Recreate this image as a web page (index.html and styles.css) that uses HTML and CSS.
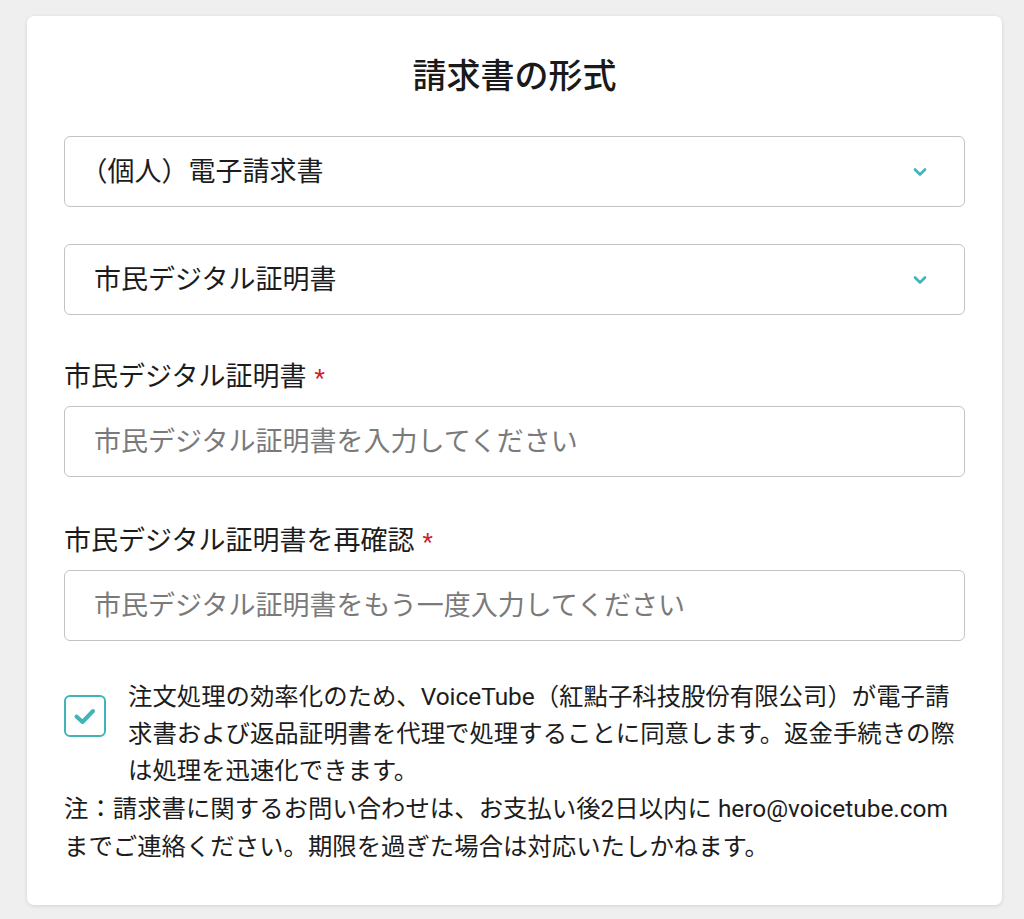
FILE: index.html
```html
<!DOCTYPE html>
<html lang="ja">
<head>
    <meta charset="UTF-8">
    <meta name="viewport" content="width=device-width, initial-scale=1.0">
    <title>請求書の形式</title>
    <link rel="stylesheet" href="styles.css">
</head>
<body>
    <div class="card">
        <h1 class="card-title">請求書の形式</h1>

        <div class="select-wrap">
            <select class="select-box">
                <option>（個人）電子請求書</option>
            </select>
            <svg class="chevron" width="14" height="10" viewBox="0 0 14 10"><path d="M2 2.5 L7 7.5 L12 2.5" fill="none" stroke="#3fb4b9" stroke-width="2.6" stroke-linecap="round" stroke-linejoin="round"/></svg>
        </div>

        <div class="select-wrap">
            <select class="select-box">
                <option>市民デジタル証明書</option>
            </select>
            <svg class="chevron" width="14" height="10" viewBox="0 0 14 10"><path d="M2 2.5 L7 7.5 L12 2.5" fill="none" stroke="#3fb4b9" stroke-width="2.6" stroke-linecap="round" stroke-linejoin="round"/></svg>
        </div>

        <div class="form-group">
            <label class="field-label" for="cert">市民デジタル証明書<span class="required">*</span></label>
            <input class="text-input" id="cert" type="text" placeholder="市民デジタル証明書を入力してください">
        </div>

        <div class="form-group">
            <label class="field-label" for="cert-confirm">市民デジタル証明書を再確認<span class="required">*</span></label>
            <input class="text-input" id="cert-confirm" type="text" placeholder="市民デジタル証明書をもう一度入力してください">
        </div>

        <label class="agree">
            <span class="checkbox">
                <svg width="26" height="22" viewBox="0 0 26 22"><path d="M4.5 11.5 L10.5 17 L21 6" fill="none" stroke="#3fb4b9" stroke-width="4" stroke-linecap="round" stroke-linejoin="round"/></svg>
            </span>
            <span class="agree-text">注文処理の効率化のため、VoiceTube（紅點子科技股份有限公司）が電子請求書および返品証明書を代理で処理することに同意します。返金手続きの際は処理を迅速化できます。</span>
        </label>

        <p class="note">注：請求書に関するお問い合わせは、お支払い後2日以内に hero@voicetube.com までご連絡ください。期限を過ぎた場合は対応いたしかねます。</p>
    </div>
</body>
</html>
```

FILE: styles.css
```css
:root {
    --teal: #3fb4b9;
    --border: #c3c3c3;
    --text: #1c1c1c;
    --placeholder: #7a7a7a;
}

body {
    margin: 0;
    padding: 16px 22px 16px 27px;
    background-color: #efefef;
    font-family: Roboto, "Noto Sans CJK JP", sans-serif;
    color: var(--text);
}

.card {
    background-color: #fff;
    border-radius: 7px;
    box-shadow: 0 1px 4px rgba(0, 0, 0, 0.12);
    padding: 33px 37px 39px;
}

.card-title {
    margin: 0 0 33px;
    text-align: center;
    font-size: 34px;
    font-weight: 500;
    line-height: 54px;
    color: #1a1a1a;
}

.select-wrap {
    position: relative;
    margin-bottom: 37px;
}

.select-box {
    appearance: none;
    -webkit-appearance: none;
    display: block;
    width: 100%;
    height: 71px;
    padding: 0 29px;
    border: 1.5px solid var(--border);
    border-radius: 6px;
    background-color: #fff;
    font-family: inherit;
    font-size: 27px;
    color: var(--text);
    text-spacing-trim: trim-start;
}

.chevron {
    position: absolute;
    right: 38px;
    top: 31px;
}

.form-group {
    margin-bottom: 44px;
}

.select-wrap + .form-group {
    margin-top: 42px;
}

.field-label {
    display: block;
    font-size: 27px;
    line-height: 40px;
    margin-bottom: 8px;
}

.required {
    color: #d0202a;
    margin-left: 8px;
    font-size: 24px;
}

.text-input {
    display: block;
    box-sizing: border-box;
    width: 100%;
    height: 71px;
    padding: 0 29px;
    border: 1.5px solid var(--border);
    border-radius: 6px;
    font-family: inherit;
    font-size: 27px;
    color: var(--text);
}

.text-input::placeholder {
    color: var(--placeholder);
}

.agree {
    display: flex;
    align-items: flex-start;
    gap: 22px;
    margin-top: -7px;
}

.checkbox {
    flex: none;
    display: flex;
    align-items: center;
    justify-content: center;
    width: 38px;
    height: 38px;
    margin-top: 17px;
    border: 2px solid var(--teal);
    border-radius: 6px;
}

.agree-text {
    font-size: 24.4px;
    line-height: 37px;
}

.note {
    margin: 1px 0 0;
    font-size: 24.4px;
    line-height: 38px;
}
```
